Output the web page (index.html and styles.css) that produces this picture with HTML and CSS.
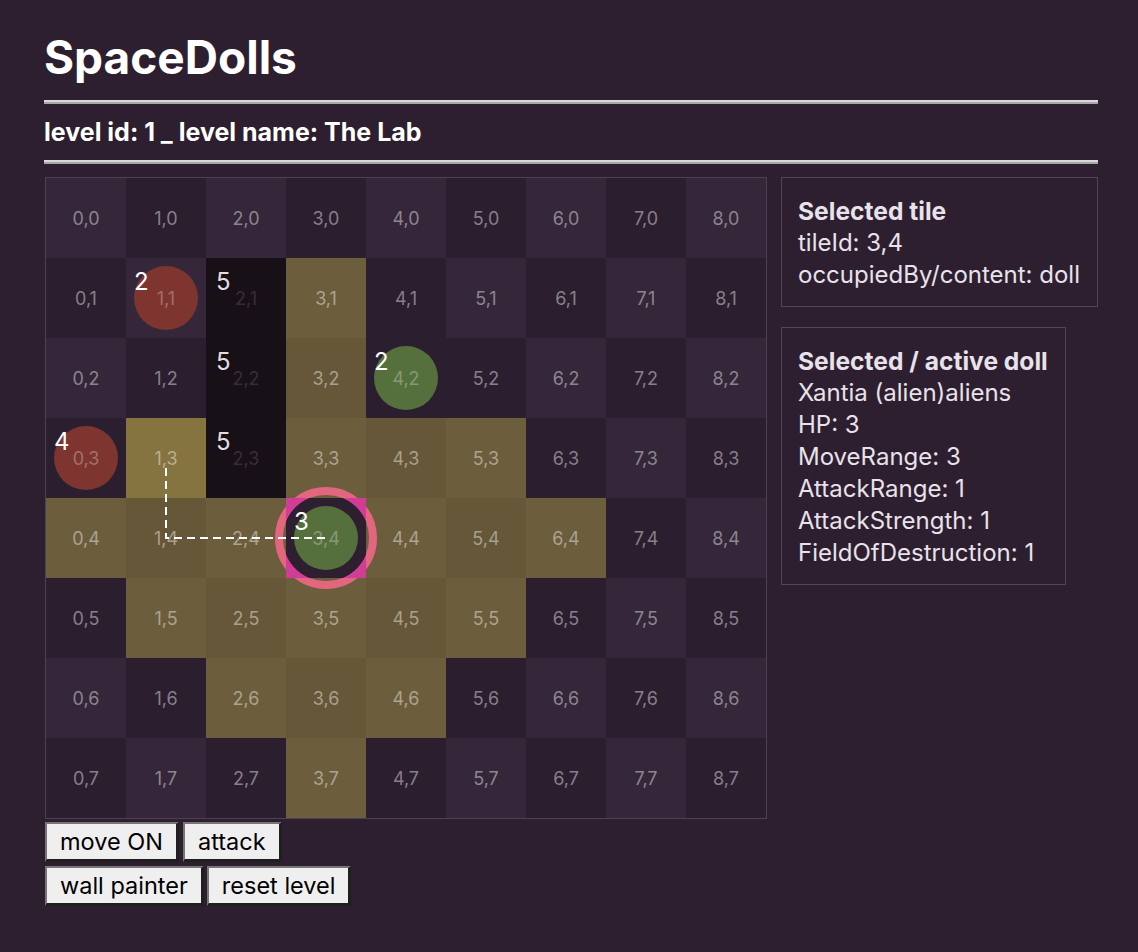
FILE: index.html
```html
<!DOCTYPE html>
<html lang="en">
<head>
<meta charset="utf-8">
<title>SpaceDolls</title>
<link rel="stylesheet" href="styles.css">
</head>
<body>
<div class="page">
  <h1 class="title">SpaceDolls</h1>
  <hr class="rule">
  <h3 class="level">level id: 1 _ level name: The Lab</h3>
  <hr class="rule rule-2">
  <div class="main">
    <div class="left">
      <div class="board-frame">
        <div class="board">
          <div class="t l"><span class="lbl">0,0</span></div>
          <div class="t d"><span class="lbl">1,0</span></div>
          <div class="t l"><span class="lbl">2,0</span></div>
          <div class="t d"><span class="lbl">3,0</span></div>
          <div class="t l"><span class="lbl">4,0</span></div>
          <div class="t d"><span class="lbl">5,0</span></div>
          <div class="t l"><span class="lbl">6,0</span></div>
          <div class="t d"><span class="lbl">7,0</span></div>
          <div class="t l"><span class="lbl">8,0</span></div>

          <div class="t d"><span class="lbl">0,1</span></div>
          <div class="t l"><span class="doll red"></span><span class="lbl on-doll">1,1</span><span class="num">2</span></div>
          <div class="t wall"><span class="lbl">2,1</span><span class="num wnum">5</span></div>
          <div class="t rl"><span class="lbl">3,1</span></div>
          <div class="t d"><span class="lbl">4,1</span></div>
          <div class="t l"><span class="lbl">5,1</span></div>
          <div class="t d"><span class="lbl">6,1</span></div>
          <div class="t l"><span class="lbl">7,1</span></div>
          <div class="t d"><span class="lbl">8,1</span></div>

          <div class="t l"><span class="lbl">0,2</span></div>
          <div class="t d"><span class="lbl">1,2</span></div>
          <div class="t wall"><span class="lbl">2,2</span><span class="num wnum">5</span></div>
          <div class="t rd"><span class="lbl">3,2</span></div>
          <div class="t d"><span class="doll green"></span><span class="lbl on-doll">4,2</span><span class="num">2</span></div>
          <div class="t d"><span class="lbl">5,2</span></div>
          <div class="t l"><span class="lbl">6,2</span></div>
          <div class="t d"><span class="lbl">7,2</span></div>
          <div class="t l"><span class="lbl">8,2</span></div>

          <div class="t d"><span class="doll red"></span><span class="lbl on-doll">0,3</span><span class="num">4</span></div>
          <div class="t hov"><span class="lbl">1,3</span></div>
          <div class="t wall"><span class="lbl">2,3</span><span class="num wnum">5</span></div>
          <div class="t rl"><span class="lbl">3,3</span></div>
          <div class="t rd"><span class="lbl">4,3</span></div>
          <div class="t rl"><span class="lbl">5,3</span></div>
          <div class="t d"><span class="lbl">6,3</span></div>
          <div class="t l"><span class="lbl">7,3</span></div>
          <div class="t d"><span class="lbl">8,3</span></div>

          <div class="t rl"><span class="lbl">0,4</span></div>
          <div class="t rd"><span class="lbl">1,4</span></div>
          <div class="t rl"><span class="lbl">2,4</span></div>
          <div class="t sel"><span class="ring"></span><span class="sel-bg"></span><span class="doll green"></span><span class="lbl on-doll">3,4</span><span class="num">3</span></div>
          <div class="t rl"><span class="lbl">4,4</span></div>
          <div class="t rd"><span class="lbl">5,4</span></div>
          <div class="t rl"><span class="lbl">6,4</span></div>
          <div class="t d"><span class="lbl">7,4</span></div>
          <div class="t l"><span class="lbl">8,4</span></div>

          <div class="t d"><span class="lbl">0,5</span></div>
          <div class="t rl"><span class="lbl">1,5</span></div>
          <div class="t rd"><span class="lbl">2,5</span></div>
          <div class="t rl"><span class="lbl">3,5</span></div>
          <div class="t rd"><span class="lbl">4,5</span></div>
          <div class="t rl"><span class="lbl">5,5</span></div>
          <div class="t d"><span class="lbl">6,5</span></div>
          <div class="t l"><span class="lbl">7,5</span></div>
          <div class="t d"><span class="lbl">8,5</span></div>

          <div class="t l"><span class="lbl">0,6</span></div>
          <div class="t d"><span class="lbl">1,6</span></div>
          <div class="t rl"><span class="lbl">2,6</span></div>
          <div class="t rd"><span class="lbl">3,6</span></div>
          <div class="t rl"><span class="lbl">4,6</span></div>
          <div class="t d"><span class="lbl">5,6</span></div>
          <div class="t l"><span class="lbl">6,6</span></div>
          <div class="t d"><span class="lbl">7,6</span></div>
          <div class="t l"><span class="lbl">8,6</span></div>

          <div class="t d"><span class="lbl">0,7</span></div>
          <div class="t l"><span class="lbl">1,7</span></div>
          <div class="t d"><span class="lbl">2,7</span></div>
          <div class="t rl"><span class="lbl">3,7</span></div>
          <div class="t d"><span class="lbl">4,7</span></div>
          <div class="t l"><span class="lbl">5,7</span></div>
          <div class="t d"><span class="lbl">6,7</span></div>
          <div class="t l"><span class="lbl">7,7</span></div>
          <div class="t d"><span class="lbl">8,7</span></div>

          <svg class="path" viewBox="0 0 720 640" width="720" height="640" aria-hidden="true">
            <path d="M120 290 V360 H282" fill="none" stroke="#ffffff" stroke-width="2" stroke-dasharray="8 5"/>
          </svg>
        </div>
      </div>
      <div class="btn-row">
        <button class="btn">move ON</button>
        <button class="btn">attack</button>
      </div>
      <div class="btn-row btn-row-2">
        <button class="btn">wall painter</button>
        <button class="btn">reset level</button>
      </div>
    </div>
    <div class="side">
      <div class="panel">
        <div class="panel-title">Selected tile</div>
        <div>tileId: 3,4</div>
        <div>occupiedBy/content: doll</div>
      </div>
      <div class="panel">
        <div class="panel-title">Selected / active doll</div>
        <div>Xantia (alien)aliens</div>
        <div>HP: 3</div>
        <div>MoveRange: 3</div>
        <div>AttackRange: 1</div>
        <div>AttackStrength: 1</div>
        <div>FieldOfDestruction: 1</div>
      </div>
    </div>
  </div>
</div>
</body>
</html>
```

FILE: styles.css
```css
html, body {
  margin: 0;
  padding: 0;
  background: #2d1f30;
}

body {
  font-family: Inter, "Noto Sans", sans-serif;
  color: #e8e2ea;
}

.page {
  padding: 29px 40px 40px 44px;
}

.title {
  margin: 0;
  font-size: 46px;
  line-height: 56px;
  font-weight: 700;
  color: #ffffff;
}

.rule {
  margin: 15px 0 0 0;
  height: 0;
  border: 0;
  border-top: 2px solid #d9d9d9;
  border-bottom: 2px solid #a6a6a6;
}

.level {
  margin: 13px 0 0 0;
  font-size: 25px;
  line-height: 30px;
  font-weight: 700;
  color: #ffffff;
}

.rule-2 {
  margin-top: 13px;
}

.main {
  display: flex;
  align-items: flex-start;
  gap: 14px;
  margin-top: 13px;
}

.left {
  margin-left: 1px;
}

.board-frame {
  border: 1px solid #4e4252;
  width: 720px;
}

.board {
  position: relative;
  display: grid;
  grid-template-columns: repeat(9, 80px);
  grid-auto-rows: 80px;
}

.t {
  position: relative;
  display: flex;
  align-items: center;
  justify-content: center;
}

.l { background: #352739; }
.d { background: #2b1e2f; }
.rl { background: #6c5d3d; }
.rd { background: #665739; }
.hov { background: #857340; }
.wall { background: #171017; }

.lbl {
  position: relative;
  font-size: 18px;
  color: rgba(255, 255, 255, 0.44);
}

.wall .lbl {
  color: rgba(255, 255, 255, 0.15);
}

.lbl.on-doll {
  color: rgba(255, 255, 255, 0.3);
}

.num {
  position: absolute;
  left: 8px;
  top: 8px;
  font-size: 24px;
  line-height: 32px;
  color: #ffffff;
}

.wnum {
  left: 10px;
  color: #e2dde2;
}

.doll {
  position: absolute;
  left: 8px;
  top: 8px;
  width: 64px;
  height: 64px;
  border-radius: 50%;
}

.doll.red { background: #7e3530; }
.doll.green { background: #56703d; }

.sel {
  z-index: 2;
}

.ring {
  position: absolute;
  left: -11px;
  top: -11px;
  width: 86px;
  height: 86px;
  border: 8px solid #e2667d;
  border-radius: 50%;
}

.sel-bg {
  position: absolute;
  inset: 0;
  background: radial-gradient(circle at center, #2d1f30 0, #2d1f30 43px, #d13c95 43.6px);
}

.path {
  position: absolute;
  left: 0;
  top: 0;
  z-index: 3;
  pointer-events: none;
}

.btn-row {
  display: flex;
  gap: 4px;
  margin-top: 3px;
}

.btn-row-2 {
  gap: 3px;
  margin-top: 4px;
}

.btn {
  font-family: Inter, "Noto Sans", sans-serif;
  font-size: 23.5px;
  line-height: 26px;
  color: #000000;
  background: #efefef;
  padding: 5px 13px 4px 13px;
  border-style: solid;
  border-width: 2px 3px 3px 2px;
  border-color: #767676 #1f1f1f #1f1f1f #767676;
  border-radius: 0;
}

.side {
  display: flex;
  flex-direction: column;
  align-items: flex-start;
  gap: 20px;
}

.panel {
  border: 1px solid #524656;
  padding: 17px 17px 15px 16px;
  font-size: 24px;
  line-height: 32px;
}

.panel-title {
  font-weight: 700;
  font-size: 24.6px;
}
```
